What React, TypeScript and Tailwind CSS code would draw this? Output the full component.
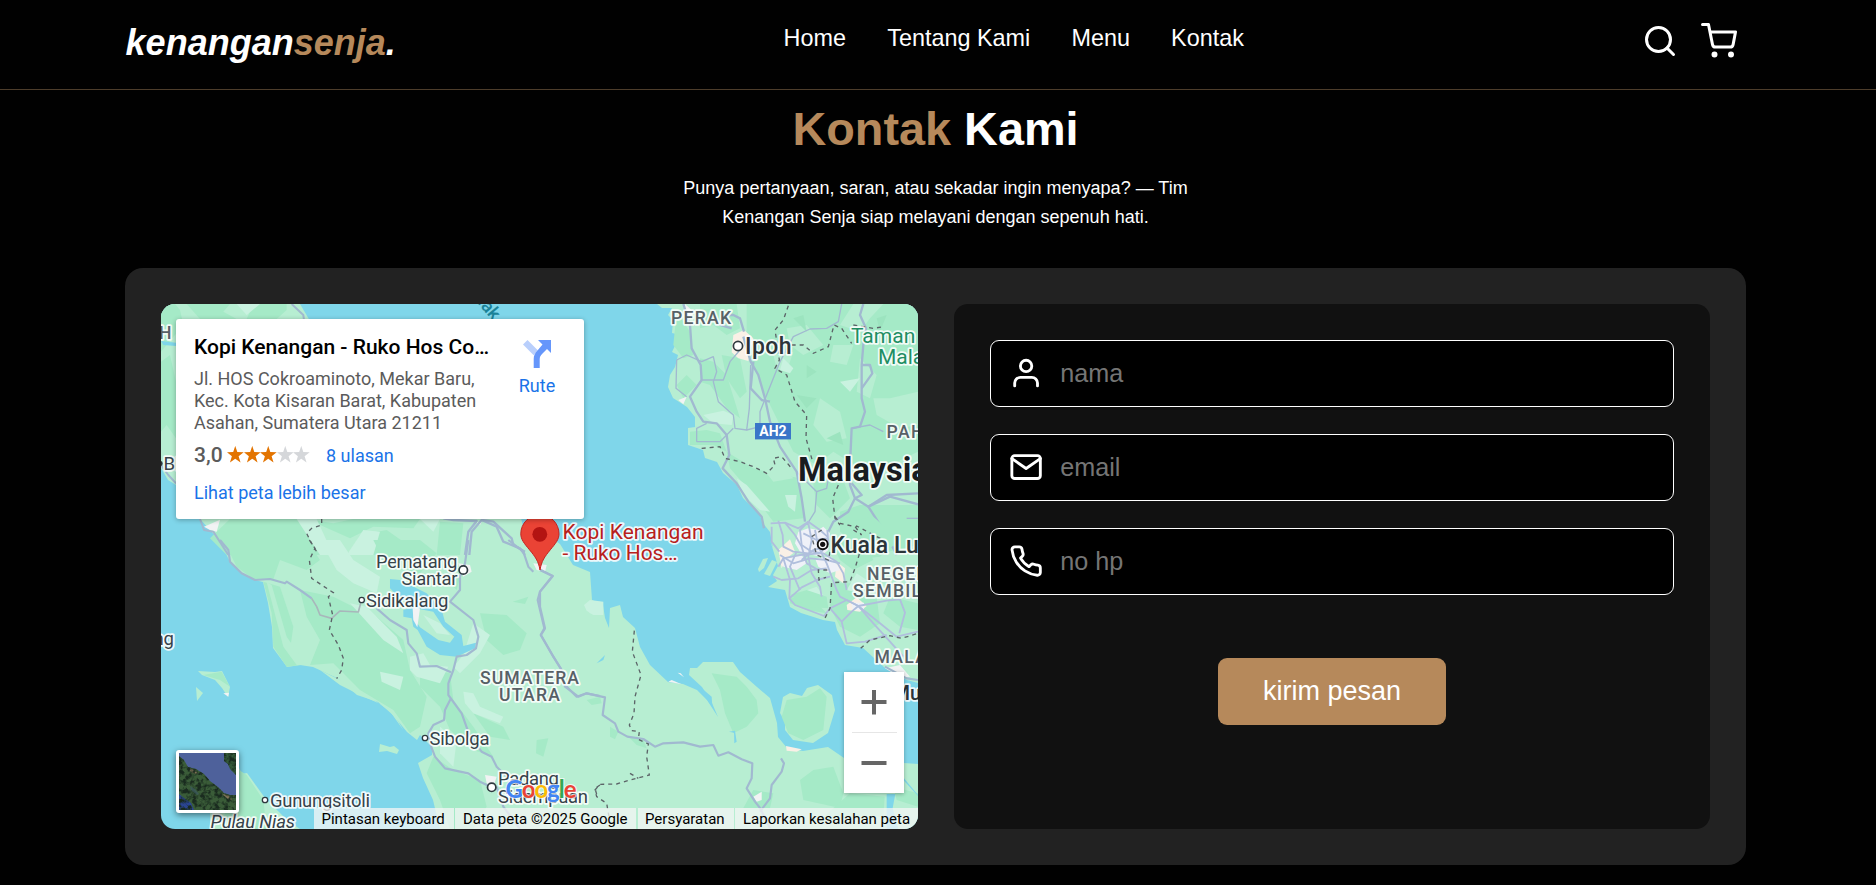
import type { ReactNode } from "react";

const ARIAL = "font-['Liberation_Sans',Arial,sans-serif]";

const WATER = "#7fd6ea";
const LAND = "#b7eed2";
const FOREST = "#a5eac7";
const PALE = "#c9f2e0";
const URBAN = "#f2f3f4";
const ROAD = "#a1b9d0";

/* ---------- icons ---------- */

function Stroke({ size, children }: { size: number; children: ReactNode }) {
  return (
    <svg
      width={size}
      height={size}
      viewBox="0 0 24 24"
      fill="none"
      stroke="currentColor"
      strokeWidth="2"
      strokeLinecap="round"
      strokeLinejoin="round"
      className="shrink-0"
    >
      {children}
    </svg>
  );
}

const SearchIcon = () => (
  <Stroke size={36}>
    <circle cx="11" cy="11" r="8" />
    <path d="M21 21l-4.35-4.35" />
  </Stroke>
);

const CartIcon = () => (
  <Stroke size={36}>
    <circle cx="9" cy="21" r="1" />
    <circle cx="20" cy="21" r="1" />
    <path d="M1 1h4l2.68 13.39a2 2 0 0 0 2 1.61h9.72a2 2 0 0 0 2-1.61L23 6H6" />
  </Stroke>
);

const UserIcon = () => (
  <Stroke size={34.2}>
    <path d="M20 21v-2a4 4 0 0 0-4-4H8a4 4 0 0 0-4 4v2" />
    <circle cx="12" cy="7" r="4" />
  </Stroke>
);

const MailIcon = () => (
  <Stroke size={34.2}>
    <path d="M4 4h16c1.1 0 2 .9 2 2v12c0 1.1-.9 2-2 2H4c-1.1 0-2-.9-2-2V6c0-1.1.9-2 2-2z" />
    <path d="M22 6l-10 7L2 6" />
  </Stroke>
);

const PhoneIcon = () => (
  <Stroke size={34.2}>
    <path d="M22 16.92v3a2 2 0 0 1-2.18 2 19.79 19.79 0 0 1-8.63-3.07 19.5 19.5 0 0 1-6-6 19.79 19.79 0 0 1-3.07-8.67A2 2 0 0 1 4.11 2h3a2 2 0 0 1 2 1.72 12.84 12.84 0 0 0 .7 2.81 2 2 0 0 1-.45 2.11L8.09 9.91a16 16 0 0 0 6 6l1.27-1.27a2 2 0 0 1 2.11-.45 12.84 12.84 0 0 0 2.81.7A2 2 0 0 1 22 16.92z" />
  </Stroke>
);

/* ---------- map drawing ---------- */

type Poly = string[];

const polys = (items: Poly, fill: string) =>
  items.map((p) => <polygon key={p} points={p} fill={fill} />);

const lines = (items: Poly, width: number, color = ROAD) =>
  items.map((p) => (
    <polyline key={p} points={p} fill="none" stroke={color} strokeWidth={width} strokeLinejoin="round" />
  ));

const borders = (items: Poly) =>
  items.map((p) => (
    <polyline key={p} points={p} fill="none" stroke="#5c6468" strokeWidth={4} strokeDasharray="12 12" />
  ));

const SUMATRA =
  "39,215 59,237 69,258 81,269 94,276 102,278 107,299 111,323 112,344 126,363 139,361 152,363 176,374 196,391 217,398 232,411 246,428 256,436 259,431 271,443 271,451 257,459 262,474 272,496 279,525 757,525 757,460 743,459 683,454 667,443 642,447 626,444 617,433 616,419 609,394 596,383 579,368 572,358 542,358 536,364 529,364 528,371 541,383 551,399 557,413 546,396 536,386 522,380 507,378 489,361 479,343 474,324 462,313 459,301 449,304 448,324 444,314 442,301 431,296 429,268 412,261 399,240 380,226 362,222 359,210 39,200";

const MALAYSIA =
  "496,0 501,4 511,4 507,11 512,16 511,29 519,31 511,48 517,51 514,63 509,71 507,83 512,94 526,103 534,113 534,123 542,122 527,124 527,141 542,146 544,154 556,158 562,169 576,181 582,194 599,211 601,218 609,228 612,244 609,236 617,262 612,271 616,277 607,283 624,286 629,303 640,309 662,316 674,318 676,326 684,341 702,344 724,364 746,376 757,379 757,0";

function Terrain() {
  return (
    <>
      <polygon points={SUMATRA} fill={LAND} />
      <polygon points={MALAYSIA} fill={LAND} />
      <polygon points="0,0 139,0 149,17 149,100 30,185 15,181 7,176 0,164" fill={LAND} />
      <polygon
        points="619,409 622,393 629,389 641,392 646,384 657,381 671,391 674,406 667,429 652,439 632,436 624,426 624,418"
        fill={LAND}
      />
      <polygon points="37,367 54,368 61,367 69,383 67,393 61,384 54,376 41,371" fill={LAND} />
      <polygon points="35,383 42,389 36,397" fill={LAND} />
      <polygon points="219,440 229,443 233,442 238,446 236,450 226,447 218,448" fill={LAND} />
      <polygon points="60,470 78,464 81,470 86,469 104,494 126,516 139,525 49,525 49,505" fill={LAND} />
      <polygon points="597,265 602,255 607,254 603,264 598,268" fill={LAND} />
      <polygon points="603,270 611,256 616,258 609,272" fill={LAND} />

      {/* north-west */}
      <g transform="translate(-41 -39) scale(.33333)">
        {polys(
          [
            "123,117 165,117 180,135 190,180 123,260",
            "200,117 330,117 310,140 350,162 240,162",
            "400,117 500,117 500,135 470,162 380,162",
            "123,290 150,270 168,350 168,520 140,480 123,500",
            "330,762 560,762 600,870 320,870 270,820",
            "690,860 720,810 800,795 850,830 870,870 640,870",
            "560,762 640,775 700,762 900,762 880,790 760,785 690,820",
            "960,770 1030,775 1020,870 950,870",
          ],
          FOREST,
        )}
        {polys(
          ["530,762 590,762 640,870 600,870", "730,795 780,800 760,870 680,870", "350,117 420,117 380,150", "900,762 960,762 940,800"],
          PALE,
        )}
        {polys(["252,785 300,764 290,800 270,795", "1070,772 1085,772 1080,780"], URBAN)}
        <polygon points="123,228 168,233 168,243 130,240" fill={WATER} />
        {lines(["515,117 550,150 552,165", "123,600 145,630 168,655", "240,762 252,795 280,800 325,870"], 6)}
        {lines(
          ["1035,870 1045,800 1070,768 1000,765 970,760", "1048,870 1055,800 1085,765 1130,785 1150,830 1200,850 1215,870", "1085,765 1120,770 1175,820 1180,840 1215,860"],
          7,
        )}
        {borders(["605,762 605,780 575,790 560,805 572,830 590,860"])}
      </g>

      {/* south-west */}
      <g transform="translate(-41 236) scale(.33333)">
        {polys(
          [
            "310,0 560,0 600,60 560,90 480,60 460,118 400,118 350,80",
            "430,125 480,140 520,260 510,330 545,375 500,380 460,320 455,220",
            "540,150 640,170 700,200 770,230 850,300 870,390 920,470 900,560 870,580 820,510 720,450 640,370 570,375 600,300 560,230",
            "900,380 990,400 1000,480 1060,560 1120,650 1060,630 990,570 960,500 900,440",
            "1080,220 1160,225 1220,280 1200,330 1150,345 1100,300",
            "1178,185 1225,170 1215,192",
            "1250,600 1285,595 1270,650 1248,640",
            "940,650 1000,690 1080,720 1100,800 1060,867 990,867 960,780 920,700",
            "1060,520 1150,560 1170,600 1110,590",
            "760,0 900,0 950,40 900,100 800,80",
            "357,690 380,705 430,780 440,867 300,867",
            "250,405 305,395 330,440 300,420",
            "980,120 1020,110 1010,150",
          ],
          FOREST,
        )}
        {polys(
          [
            "600,0 660,0 700,60 780,110 770,160 700,130 650,90",
            "690,190 740,200 830,290 850,340 790,300",
            "870,350 910,340 930,375 985,380 960,430 890,410 870,390",
            "1030,455 1060,460 1080,500 1150,530 1140,550 1060,520 1035,490",
            "1060,250 1110,285 1080,340 1020,400 1000,380 1030,345",
            "780,395 850,410 840,450 785,425",
            "1395,195 1440,185 1440,225 1410,220",
            "960,560 1010,600 1000,680 960,640",
          ],
          PALE,
        )}
        {polys(["600,390 680,430 770,485 820,520 850,570 800,500 720,465 660,435", "440,126 455,135 500,290 560,375 530,375 490,320"], LAND)}
        <polygon
          points="810,117 840,120 920,160 965,210 975,245 1025,285 1030,318 1068,308 1065,325 1010,350 960,345 920,320 893,270 880,260 875,235 850,230 850,210 880,200 830,165 810,145"
          fill={WATER}
        />
        <polygon points="885,205 940,215 970,260 1003,290 990,308 955,300 900,262 885,240" fill={LAND} />
        <polygon points="878,205 900,205 892,262 880,240" fill={URBAN} />
        <polygon points="910,225 960,250 990,285 950,280" fill={PALE} />
        {polys(
          ["1240,70 1280,75 1275,95 1250,90", "1015,70 1050,75 1055,95 1030,110", "1095,705 1130,710 1120,740 1100,730", "310,460 327,458 325,470"],
          URBAN,
        )}
        {lines(
          [
            "300,0 325,30 330,65 365,100 405,120 450,117 495,130 500,125 540,150 575,175",
            "1045,0 1035,70 1020,110 1020,150 990,185 1060,240 1075,290 1068,325 1040,345 1010,350 1000,390 985,430 985,465 1025,520 1050,590 1085,635 1115,650 1130,680 1170,720",
            "770,205 810,240 860,270 865,310 890,340 900,380 950,378 993,397",
            "993,475 975,510 972,540 940,555 925,580 930,610 945,650 975,685 1045,700 1080,725 1115,742",
            "1262,90 1298,108 1260,155 1253,180 1273,265 1262,285 1300,350 1325,390 1330,430 1370,470 1400,460 1440,468",
            "1130,740 1150,800 1200,867",
            "1165,0 1210,35 1225,80 1240,95",
          ],
          6.5,
        )}
        {lines(["575,175 590,200 600,225 635,235 660,213 715,216 722,190"], 5, "#a8b7bb")}
        {borders(["568,0 585,25 568,60 575,115 605,135 640,158 625,170 638,225 628,270 655,315 670,355 665,390 650,416", "1440,735 1425,745 1432,770"])}
      </g>

      {/* north-east */}
      <g transform="translate(379 -39) scale(.33333)">
        {polys(
          [
            "480,117 590,117 600,190 560,210 520,180 480,190",
            "620,117 1134,117 1134,560 1050,600 960,610 880,560 830,600 760,560 720,480 680,400 640,300 620,220",
            "410,140 450,200 460,270 430,280 400,240",
            "480,280 520,290 560,330 600,460 560,430 510,360 480,350",
            "440,330 470,360 430,400 410,360",
            "500,495 540,505 560,560 520,540 450,540 450,500",
            "560,560 640,610 700,625 780,640 790,760 700,770 640,690 570,610",
            "830,610 900,620 930,700 870,760 830,720 820,660",
            "900,740 960,720 1134,720 1134,840 1000,870 900,800",
            "545,270 600,280 620,380 600,400 560,340",
          ],
          FOREST,
        )}
        {polys(
          [
            "700,270 760,260 740,320 710,310",
            "840,400 900,440 920,520 860,530 820,480",
            "940,117 1030,117 990,160 960,200 900,180",
            "1050,400 1134,380 1134,480 1080,490 1010,450 1000,400",
            "660,600 720,600 760,640 700,650",
            "960,280 1010,330 990,400 950,380",
            "740,190 800,180 850,240 790,270 750,240",
            "660,440 690,450 690,540 640,500",
            "1000,640 1080,600 1134,640 1134,680 1050,690",
            "880,240 940,240 920,300 870,290",
          ],
          LAND,
        )}
        {polys(
          [
            "490,450 550,437 580,450 575,480 520,475",
            "590,640 620,660 690,740 660,735 610,690",
            "730,280 760,310 750,325 720,315",
            "735,690 770,690 765,740 745,725",
            "900,350 960,340 930,380",
          ],
          PALE,
        )}
        {polys(["800,300 830,320 800,340", "770,390 830,400 800,430", "860,520 900,500 910,540", "760,160 790,150 800,200", "1010,160 1040,150 1020,200"], "#9ce4bf")}
        {polys(["580,210 612,195 640,220 625,288 595,280 575,262"], "#faf0e6")}
        {polys(["435,117 460,140 450,160 430,140", "415,405 440,395 430,418"], URBAN)}
        {lines(
          [
            "430,117 450,180 455,250 482,300 485,345 450,395 470,440 490,470 530,475 560,510 568,570 548,610 590,655 625,710 665,755 672,790",
            "610,215 632,290 655,330 675,400 690,470 720,545 770,620 785,700 795,770",
            "575,190 540,180 520,160",
            "555,150 580,150 600,160 612,200",
            "970,117 960,150 978,190 970,240 965,300 965,400 975,440 960,485 935,490 930,600 930,660 945,700 925,740 880,770 865,800",
            "965,300 990,300 997,325 965,370",
            "935,655 965,690 945,700 985,725 1040,690 1134,685",
            "985,725 1050,695 1134,718",
            "985,725 1020,780 1060,850 1070,870",
            "640,290 632,370 665,405 690,410",
          ],
          7,
        )}
        {lines(
          [
            "485,345 550,345 570,290 600,255",
            "410,285 440,270 485,290 520,275 530,320 520,350 535,410 580,450 585,490 620,495 628,430 632,300",
            "410,285 408,370 440,395",
            "470,530 470,490 500,475",
            "620,495 660,485 660,440 700,340 720,290 760,215 810,192 860,190 895,170 905,117",
            "470,530 540,530 580,490",
            "935,490 990,480 1030,500",
            "770,620 830,680 825,740 800,780",
            "830,680 860,670 865,640",
            "1100,760 1134,760",
          ],
          4,
        )}
        {borders([
          "745,122 730,165 705,195 712,240 718,285 705,310 740,330 765,410 800,450 798,520 818,590",
          "755,240 790,240 820,265 865,245 882,180 905,190 935,235",
          "940,180 1000,190 1030,185",
          "485,550 540,545 555,580 600,590 640,605 680,625 705,600 700,580 725,575 755,610",
          "895,660 878,700 885,760 900,780",
        ])}
      </g>

      {/* south-east */}
      <g transform="translate(379 236) scale(.33333)">
        {polys(
          [
            "515,400 590,410 620,440 650,480 655,520 620,560 580,580 555,520 540,450",
            "740,480 800,470 840,445 860,470 850,570 790,600 745,580 725,530",
            "750,170 830,190 860,220 800,210 750,190",
            "870,130 940,130 1010,170 1020,250 960,290 900,260 870,200",
            "870,0 970,0 1000,60 940,90 900,60",
            "780,720 820,690 880,680 910,760 900,804 790,780",
            "1050,170 1134,190 1134,270 1080,260 1030,220",
            "930,760 1034,770 1030,830 840,840",
            "140,480 180,470 185,490 155,495",
            "210,560 235,575 225,598 210,590",
            "265,590 310,600 320,625 290,615",
            "640,750 700,760 690,804 610,804",
            "1060,740 1134,760 1134,800 1070,780",
          ],
          FOREST,
        )}
        {polys(["132,195 150,180 190,185 190,225 160,225 140,212", "760,165 830,140 850,165 810,185", "950,100 980,120 960,160 920,150"], PALE)}
        {polys(["738,618 785,628 770,635 740,632"], "#faf0e6")}
        {polys(["1035,385 1080,375 1110,410 1080,412", "385,425 395,420 425,433", "413,398 422,400 432,412", "640,770 665,755 665,780 650,785"], URBAN)}
        {polys(["170,370 195,345 190,360", "567,575 585,572 590,605 583,610 582,578", "480,440 515,470 517,500 490,465", "1040,762 1066,762 1058,804 1075,867 1040,867", "1092,715 1134,765 1134,768 1092,722"], WATER)}
        {lines(
          [
            "0,90 38,108 0,155 0,200 15,265 3,285 40,350 62,385 75,440 115,470 140,460 195,472 188,525 225,550 235,575 262,590 310,597 345,620 370,610 430,607 480,620 520,615 535,647 565,637 605,658 637,670 635,715 620,745 645,785 660,804 690,865",
            "723,655 732,670 725,695 695,735 690,775 660,815",
            "1035,380 1100,415 1134,420",
          ],
          6.5,
        )}
        {borders([
          "283,272 277,335 303,405 285,470 282,520 268,555 275,572 298,575 295,598 325,612 320,650 328,705 270,720 230,732 180,733 165,750 170,770 200,790 207,830",
          "270,700 295,715",
        ])}
      </g>

      {/* Klang Valley */}
      <g transform="translate(579 176) scale(.33333)">
        {polys(["150,345 200,330 260,350 265,385 200,380", "300,130 400,110 480,180 420,230 330,240"], FOREST)}
        {polys(["115,210 150,178 165,215 140,235 125,265", "290,245 315,265 310,310 285,290", "320,375 350,352 380,378 360,395 322,390"], "#faf0e6")}
        {polys(
          [
            "175,155 205,145 235,150 250,140 270,160 265,210 240,230 180,215 165,190",
            "125,235 185,225 200,250 170,270 130,260",
            "225,235 275,230 300,270 270,280 235,260",
            "335,368 372,368 372,392 338,390",
          ],
          "#eff1f8",
        )}
        {lines(
          [
            "92,130 135,128 175,145 205,125 240,150 262,170",
            "115,122 128,165 130,200 160,215 205,220",
            "135,128 165,165 185,200 200,250 235,270",
            "205,125 180,150 185,195 215,215 250,220 290,245 310,280 320,330",
            "262,150 265,190 240,220 180,225 130,235 115,260",
            "120,225 160,250 210,235 260,240 300,250",
            "205,130 215,180 205,230 215,280 240,320 245,350",
            "170,215 150,260 175,320 180,330",
            "100,290 125,300 175,295 215,270 260,265",
            "130,235 150,300 148,355 185,322 230,300 270,290",
            "225,150 235,200 260,250 290,330 300,350 355,378",
            "190,160 230,180 262,175",
            "185,240 220,210 262,200",
            "148,355 165,375 252,408 270,385 320,360 355,378",
            "270,385 305,425 320,490 375,485 440,465",
            "305,425 335,395 355,378 400,430 450,485 490,530",
            "355,378 420,430 470,470 534,455",
            "355,378 440,362 480,358 495,398 478,460",
            "95,140 95,185 118,215",
          ],
          5.5,
          "#b0bfdd",
        )}
        {borders([
          "285,110 300,130 345,140 365,165 340,150 350,138 395,162 430,180",
          "245,150 215,170 230,225 265,240 270,215",
          "358,222 345,265 330,305 275,308 270,385 252,420",
          "262,270 235,270 237,300 258,292",
          "362,505 390,480 450,467 485,475 534,460",
        ])}
      </g>
    </>
  );
}

type LabelProps = {
  x: number;
  y: number;
  size?: number;
  width?: number;
  weight?: number;
  fill?: string;
  anchor?: "start" | "middle" | "end";
  spacing?: number;
  italic?: boolean;
  children: string;
};

function Label({ x, y, size = 18.5, width, weight = 400, fill = "#37424a", anchor = "start", spacing, italic, children }: LabelProps) {
  return (
    <text
      x={x}
      y={y}
      fontSize={size}
      fontWeight={weight}
      fontStyle={italic ? "italic" : undefined}
      fill={fill}
      textAnchor={anchor}
      letterSpacing={spacing}
      textLength={width}
      stroke="#ffffff"
      strokeOpacity="0.85"
      strokeWidth="3.6"
      strokeLinejoin="round"
      paintOrder="stroke"
    >
      {children}
    </text>
  );
}

const Town = ({ x, y, r = 2.7 }: { x: number; y: number; r?: number }) => (
  <circle cx={x} cy={y} r={r} fill="#fff" stroke="#2f3a40" strokeWidth={r > 3 ? 1.7 : 1.3} />
);

const REGION = "#576066";

function MapLabels() {
  return (
    <g fontFamily="Roboto, sans-serif">
      <Label x={510} y={20} size={17.6} weight={500} fill={REGION} width={60}>PERAK</Label>
      <Town x={577} y={42} r={4.6} />
      <Label x={584} y={50.3} size={23} weight={500} fill="#2b3439" width={46.5}>Ipoh</Label>
      <Label x={690} y={38.7} size={21} fill="#1e8e63">Taman Negara</Label>
      <Label x={717} y={60} size={21} fill="#1e8e63">Malaysia</Label>
      <Label x={725.5} y={134} size={17.6} weight={500} fill={REGION} spacing={1.5}>PAHANG</Label>
      <rect x={594} y={119} width={36} height={16.4} fill="#3a76c8" />
      <text x={612} y={132.3} fontSize={14} fontWeight={700} fill="#fff" textAnchor="middle">AH2</text>
      <Label x={637} y={176.7} size={32.5} weight={700} fill="#191c1f">Malaysia</Label>
      <circle cx={661.7} cy={240.3} r={5} fill="#fff" stroke="#111" strokeWidth={1.9} />
      <circle cx={661.7} cy={240.3} r={2.6} fill="#111" />
      <Label x={669.5} y={248.9} size={23} weight={500} fill="#2b3439">Kuala Lumpur</Label>
      <Label x={706} y={276.3} size={17.6} weight={500} fill={REGION} spacing={1.3}>NEGERI</Label>
      <Label x={692} y={293} size={17.6} weight={500} fill={REGION} spacing={1.3}>SEMBILAN</Label>
      <Label x={713.5} y={359} size={17.6} weight={500} fill={REGION} spacing={1.3}>MALACCA</Label>
      <Label x={731.5} y={396} size={20} weight={500} fill="#2b3439">Muar</Label>
      <Label x={296.5} y={264} width={81.5} anchor="end">Pematang</Label>
      <Label x={296.5} y={281.3} width={56} anchor="end">Siantar</Label>
      <Town x={302.3} y={266} r={4.2} />
      <Town x={200.7} y={296} />
      <Label x={205} y={303} width={82.5}>Sidikalang</Label>
      <Label x={319} y={380} size={17.6} weight={500} fill={REGION} width={99}>SUMATERA</Label>
      <Label x={338} y={396.7} size={17.6} weight={500} fill={REGION} width={61}>UTARA</Label>
      <Town x={264} y={434} />
      <Label x={268.5} y={441.3} width={60}>Sibolga</Label>
      <Town x={330.7} y={483.3} r={4.2} />
      <Label x={337} y={481.3} width={61}>Padang</Label>
      <Label x={337} y={499.3} width={90}>Sidempuan</Label>
      <Town x={104} y={496} />
      <Label x={109} y={503} width={100}>Gunungsitoli</Label>
      <Label x={49.5} y={524.3} width={84.5} italic>Pulau Nias</Label>
      <Label x={13} y={341} anchor="end">Sinabang</Label>
      <Label x={10.5} y={35} size={17.6} weight={500} fill={REGION} anchor="end">ACEH</Label>
      <circle cx={-1} cy={159.5} r={2.7} fill="#2b3439" />
      <Label x={2.5} y={166}>Bireuen</Label>
      <text transform="translate(331.5 17) rotate(50)" fontSize={18} fontWeight={500} fill="#1a8298" textAnchor="end">
        Selat Malak
      </text>

      <path
        d="M379 266c-1.500-9-5-13.500-10.500-20.200-5.200-6.300-8.700-10.300-8.700-16a19 19 0 0 1 38.200 0c0 5.700-3.500 9.700-8.700 16-5.500 6.700-8.800 11.200-10.300 20.200z"
        fill="#ea4335"
        stroke="#c5221f"
        strokeWidth={1}
      />
      <circle cx={378.8} cy={230.3} r={7.4} fill="#b31412" />
      <Label x={401.5} y={234.8} size={21} fill="#b8201c" width={141}>Kopi Kenangan</Label>
      <Label x={401.5} y={256.3} size={21} fill="#b8201c" width={115}>- Ruko Hos…</Label>

      <text
        x={344.5}
        y={493.5}
        fontSize={24}
        fontFamily="Lato, sans-serif"
        fontWeight={700}
        textLength={71}
        stroke="#fff"
        strokeOpacity={0.7}
        strokeWidth={2}
        paintOrder="stroke"
      >
        <tspan fill="#4285f4">G</tspan>
        <tspan fill="#ea4335">o</tspan>
        <tspan fill="#fbbc05">o</tspan>
        <tspan fill="#4285f4">g</tspan>
        <tspan fill="#34a853">l</tspan>
        <tspan fill="#ea4335">e</tspan>
      </text>
    </g>
  );
}

function Star({ on }: { on: boolean }) {
  return (
    <svg width="16.5" height="17" viewBox="0 0 24 24" className={on ? "shrink-0 fill-[#e37400]" : "shrink-0 fill-[#d5d7da]"}>
      <path d="M12 -.5l3 8.900 9.300 .2-7.400 5.800L19.700 23.500 12 18.200l-7.700 5.300 2.800-9.100L-.3 8.600l9.300-.2z" />
    </svg>
  );
}

function PlaceCard() {
  return (
    <div className="absolute left-[15px] top-[15px] flex h-[200px] w-[408px] justify-between rounded-[3px] bg-white pl-[18px] pr-[17px] shadow-[0_1px_5px_rgba(0,0,0,0.3)]">
      <div className="w-[298px]">
        <div className="mt-[15px] truncate text-[21px]/[26px] font-medium text-black">
          Kopi Kenangan - Ruko Hos Cokroaminoto
        </div>
        <p className="mt-[8px] whitespace-nowrap text-[18px]/[22px] text-[#5b5b5b]">
          Jl. HOS Cokroaminoto, Mekar Baru,
          <br />
          Kec. Kota Kisaran Barat, Kabupaten
          <br />
          Asahan, Sumatera Utara 21211
        </p>
        <div className="mt-[8px] flex h-[26px] items-center">
          <span className="w-[33px] text-[21px]/[26px] font-medium text-[#5b5b5b]">3,0</span>
          <span className="flex w-[99px] pb-[2px]">
            {[1, 2, 3, 4, 5].map((n) => (
              <Star key={n} on={n <= 3} />
            ))}
          </span>
          <a className="pt-[2px] text-[18px]/[26px] text-[#1a73e8]">8 ulasan</a>
        </div>
        <a className="mt-[12px] block text-[18px]/[26px] text-[#1a73e8]">Lihat peta lebih besar</a>
      </div>
      <div className="flex w-[60px] flex-col items-center pt-[21px]">
        <svg width="28" height="28" viewBox="0 0 28 28">
          <path d="M4.500 0L0 4.500l10.700 10.700L15 10.500z" fill="#b9cffc" />
          <path d="M15 0h13v13l-4-4-4.500 4.500c-2 2-2.800 3.500-2.800 6V28h-6v-9c0-3.500 1.200-6 3.800-8.500L19.500 4.500z" fill="#6596fb" />
        </svg>
        <a className="mt-[5px] text-[18px]/[26px] text-[#1a73e8]">Rute</a>
      </div>
    </div>
  );
}

function SatelliteThumb() {
  return (
    <div className="absolute left-[15px] top-[446px] h-[63px] w-[63px] rounded-[3px] border-[3px] border-white bg-white shadow-[0_2px_6px_rgba(0,0,0,0.5)]">
      <svg width="57" height="57" viewBox="0 0 57 57">
        <defs>
          <filter id="grain" x="0" y="0" width="100%" height="100%" colorInterpolationFilters="sRGB">
            <feTurbulence type="fractalNoise" baseFrequency="0.22" numOctaves="3" seed="4" result="n" />
            <feColorMatrix in="n" type="matrix" values="0 0 0 0 0.1  0 0 0 0 0.17  0 0 0 0 0.12  0 3.5 0 0 -1.4" result="d" />
            <feComposite in="d" in2="SourceGraphic" operator="in" result="g" />
            <feMerge>
              <feMergeNode in="SourceGraphic" />
              <feMergeNode in="g" />
            </feMerge>
          </filter>
        </defs>
        <rect width="57" height="57" fill="#4e619b" />
        <g filter="url(#grain)">
          <path d="M0 3l5 4 4 7 8 2 8 5 6 7 8 6 6 6 6 2 6 0v15H0z" fill="#3a5c38" />
          <path d="M45 0h12v22l-6-6-2-5-4-3z" fill="#335838" />
          <path d="M9 15l7 2 3 4-6-1zM43 41l6 1 5 5-5-1z" fill="#86775a" />
          <path d="M0 41l5 4 7 5 3 7H0z" fill="#2a4490" />
        </g>
        <path d="M11 33l5 3 4 5-2 1-6-5z" fill="#3c5a60" opacity="0.7" />
      </svg>
    </div>
  );
}

function MapEmbed() {
  return (
    <div className="relative h-[525px] w-[757px] shrink-0 overflow-hidden rounded-[14px] bg-[#7fd6ea] font-[Roboto,sans-serif]">
      <svg width="757" height="525" viewBox="0 0 757 525" className="block">
        <Terrain />
        <MapLabels />
      </svg>
      <PlaceCard />
      <SatelliteThumb />
      <div className="absolute left-[683px] top-[368px] flex h-[121px] w-[60px] flex-col items-center bg-white shadow-[0_1px_4px_rgba(0,0,0,0.3)]">
        <svg width="60" height="60" viewBox="0 0 60 60">
          <path d="M17.500 30h25M30 18v24.500" stroke="#666" strokeWidth="4" />
        </svg>
        <div className="h-px w-[45px] bg-[#e6e6e6]" />
        <svg width="60" height="60" viewBox="0 0 60 60">
          <path d="M17.500 30h25" stroke="#666" strokeWidth="4" />
        </svg>
      </div>
      <div className="absolute bottom-0 right-0 flex h-[21px] gap-px whitespace-nowrap text-[15px]/[22px] text-black">
        <span className="w-[140px] bg-[#f5f5f5]/75 pl-[7.5px]">Pintasan keyboard</span>
        <span className="w-[181px] bg-[#f5f5f5]/75 pl-[8px]">Data peta ©2025 Google</span>
        <span className="ml-px w-[96px] bg-[#f5f5f5]/75 pl-[7px]">Persyaratan</span>
        <span className="w-[183px] bg-[#f5f5f5]/75 pl-[8px]">Laporkan kesalahan peta</span>
      </div>
    </div>
  );
}

/* ---------- page ---------- */

function Field({ icon, type, placeholder }: { icon: ReactNode; type: string; placeholder: string }) {
  return (
    <label className="flex h-[67px] items-center rounded-[9px] border border-white bg-black pl-[18px]">
      {icon}
      <input
        type={type}
        placeholder={placeholder}
        className="ml-[17px] w-full bg-transparent text-[25.2px] text-white outline-none placeholder:text-[#757575]"
      />
    </label>
  );
}

export default function App() {
  return (
    <div className={`h-[885px] overflow-hidden bg-[#010101] text-white ${ARIAL}`}>
      <header className="flex h-[90px] border-b border-[#4d3d2b] pl-[125.6px] pr-[139px]">
        <a className="mt-[22px] w-[658px] text-[36px]/[42px] font-bold italic">
          kenangan<span className="text-[#b6895b]">senja</span>.
        </a>
        <nav className="mt-[25px] flex gap-[41.2px] text-[23.4px]/[27px]">
          <a>Home</a>
          <a>Tentang Kami</a>
          <a>Menu</a>
          <a>Kontak</a>
        </nav>
        <div className="ml-auto mt-[23px] flex gap-[23px]">
          <SearchIcon />
          <CartIcon />
        </div>
      </header>

      <main className="pl-[125px] pr-[130px]">
        <h2 className="pt-[12px] text-center text-[46.8px]/[54px] font-bold">
          <span className="text-[#b6895b]">Kontak</span> Kami
        </h2>
        <p className="mx-auto mt-[18px] w-[540px] text-center text-[18px]/[29px]">
          Punya pertanyaan, saran, atau sekadar ingin menyapa? — Tim Kenangan Senja siap melayani dengan sepenuh hati.
        </p>
        <section className="mt-[36px] flex h-[597px] gap-[36px] rounded-[18px] bg-[#222] p-[36px]">
          <MapEmbed />
          <form className="flex h-[525px] grow flex-col gap-[27px] rounded-[14px] bg-[#111] p-[36px]">
            <Field icon={<UserIcon />} type="text" placeholder="nama" />
            <Field icon={<MailIcon />} type="email" placeholder="email" />
            <Field icon={<PhoneIcon />} type="text" placeholder="no hp" />
            <button
              type="button"
              className="mt-[36px] h-[67px] w-[228px] self-center rounded-[9px] bg-[#b6895b] text-[27px] text-white"
            >
              kirim pesan
            </button>
          </form>
        </section>
      </main>
    </div>
  );
}
